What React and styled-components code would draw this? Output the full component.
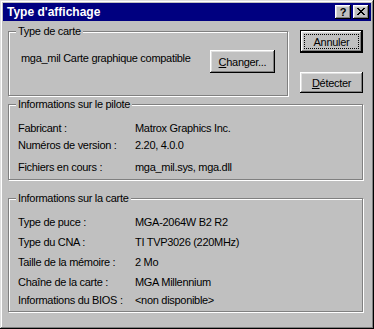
import styled, { createGlobalStyle } from "styled-components";

const GlobalStyle = createGlobalStyle`
  html, body {
    margin: 0;
    padding: 0;
    background: #c0c0c0;
  }
  * {
    box-sizing: border-box;
  }
`;

const Window = styled.div`
  width: 374px;
  height: 329px;
  padding: 3px;
  background: #c0c0c0;
  font-family: "Liberation Sans", Arial, sans-serif;
  font-size: 11px;
  letter-spacing: -0.3px;
  color: #000;
  box-shadow: inset -1px -1px #000, inset 1px 1px #dfdfdf,
    inset -2px -2px #808080, inset 2px 2px #fff;
  display: flex;
  flex-direction: column;
`;

const TitleBar = styled.div`
  height: 18px;
  background: #000080;
  display: flex;
  align-items: center;
  padding: 0 2px 0 4px;
`;

const Title = styled.div`
  flex: 1;
  color: #fff;
  font-weight: bold;
  font-size: 12px;
  letter-spacing: 0;
`;

const TitleButton = styled.div`
  width: 16px;
  height: 14px;
  margin-left: ${({ $gap }) => $gap || 0}px;
  background: #c0c0c0;
  box-shadow: inset -1px -1px #000, inset 1px 1px #fff,
    inset -2px -2px #808080, inset 2px 2px #dfdfdf;
  display: flex;
  align-items: center;
  justify-content: center;
  font-weight: bold;
  font-size: 11px;
  letter-spacing: 0;
  line-height: 14px;
  padding-bottom: 1px;
`;

const Body = styled.div`
  flex: 1;
  padding: 9px 8px 0 5px;
  display: flex;
  flex-direction: column;
`;

const TopRow = styled.div`
  display: flex;
  gap: 12px;
`;

const Group = styled.div`
  position: relative;
  width: ${({ $w }) => ($w ? `${$w}px` : "auto")};
  margin-top: ${({ $mt }) => $mt || 0}px;
  padding: ${({ $pad }) => $pad};
  border: 1px solid #808080;
  box-shadow: inset 1px 1px #fff, 1px 1px #fff;
`;

const Legend = styled.span`
  position: absolute;
  top: -8px;
  left: 7px;
  padding: 0 2px 0 2px;
  background: #c0c0c0;
  line-height: 14px;
`;

const CardRow = styled.div`
  display: flex;
  justify-content: space-between;
  align-items: flex-start;
`;

const CardName = styled.span`
  margin-top: 1px;
  line-height: 14px;
`;

const ButtonColumn = styled.div`
  display: flex;
  flex-direction: column;
  gap: 19px;
`;

const Button = styled.div`
  width: ${({ $w }) => $w}px;
  height: ${({ $h }) => $h}px;
  background: #c0c0c0;
  display: flex;
  align-items: center;
  justify-content: center;
  position: relative;
  box-shadow: ${({ $default }) =>
    $default
      ? "inset 0 0 0 1px #000, inset -2px -2px #000, inset 2px 2px #fff, inset -3px -3px #808080, inset 3px 3px #dfdfdf"
      : "inset -1px -1px #000, inset 1px 1px #fff, inset -2px -2px #808080, inset 2px 2px #dfdfdf"};
`;

const Focus = styled.span`
  position: absolute;
  inset: 4px 4px 4px 4px;
  border: 1px dotted #000;
`;

const InfoGrid = styled.div`
  display: grid;
  grid-template-columns: 117px auto;
`;

const Cell = styled.div`
  line-height: 14px;
  height: 14px;
  margin-top: ${({ $mt }) => $mt || 0}px;
  white-space: nowrap;
`;

const CloseGlyph = () => (
  <svg width="8" height="7" viewBox="0 0 8 7" shapeRendering="crispEdges">
    <path
      d="M0 0h2v1h-2zM6 0h2v1h-2zM1 1h2v1h-2zM5 1h2v1h-2zM2 2h4v1h-4zM3 3h2v1h-2zM2 4h4v1h-4zM1 5h2v1h-2zM5 5h2v1h-2zM0 6h2v1h-2zM6 6h2v1h-2z"
      fill="#000"
    />
  </svg>
);

const driverRows = [
  ["Fabricant :", "Matrox Graphics Inc.", 0],
  ["Numéros de version :", "2.20, 4.0.0", 3],
  ["Fichiers en cours :", "mga_mil.sys, mga.dll", 8],
];

const cardRows = [
  ["Type de puce :", "MGA-2064W B2 R2", 0],
  ["Type du CNA :", "TI TVP3026 (220MHz)", 6],
  ["Taille de la mémoire :", "2 Mo", 6],
  ["Chaîne de la carte :", "MGA Millennium", 6],
  ["Informations du BIOS :", "<non disponible>", 4],
];

const InfoRows = ({ rows }) => (
  <InfoGrid>
    {rows.map(([label, value, mt]) => [
      <Cell key={label} $mt={mt}>
        {label}
      </Cell>,
      <Cell key={label + "v"} $mt={mt}>
        {value}
      </Cell>,
    ])}
  </InfoGrid>
);

const App = () => {
  return (
    <>
      <GlobalStyle />
      <Window>
        <TitleBar>
          <Title>Type d'affichage</Title>
          <TitleButton>?</TitleButton>
          <TitleButton $gap={2}>
            <CloseGlyph />
          </TitleButton>
        </TitleBar>
        <Body>
          <TopRow>
            <Group $w={280} $mt={1} $pad="18px 12px 22px 12px">
              <Legend>Type de carte</Legend>
              <CardRow>
                <CardName>mga_mil Carte graphique compatible</CardName>
                <Button $w={65} $h={23}>
                  <span>
                    <u>C</u>hanger...
                  </span>
                </Button>
              </CardRow>
            </Group>
            <ButtonColumn>
              <Button $w={63} $h={23} $default>
                <Focus />
                <span>Annuler</span>
              </Button>
              <Button $w={63} $h={21}>
                <span>
                  <u>D</u>étecter
                </span>
              </Button>
            </ButtonColumn>
          </TopRow>
          <Group $mt={8} $pad="16px 9px 5px 9px">
            <Legend>Informations sur le pilote</Legend>
            <InfoRows rows={driverRows} />
          </Group>
          <Group $mt={18} $pad="16px 9px 4px 9px">
            <Legend>Informations sur la carte</Legend>
            <InfoRows rows={cardRows} />
          </Group>
        </Body>
      </Window>
    </>
  );
};

export default App;
